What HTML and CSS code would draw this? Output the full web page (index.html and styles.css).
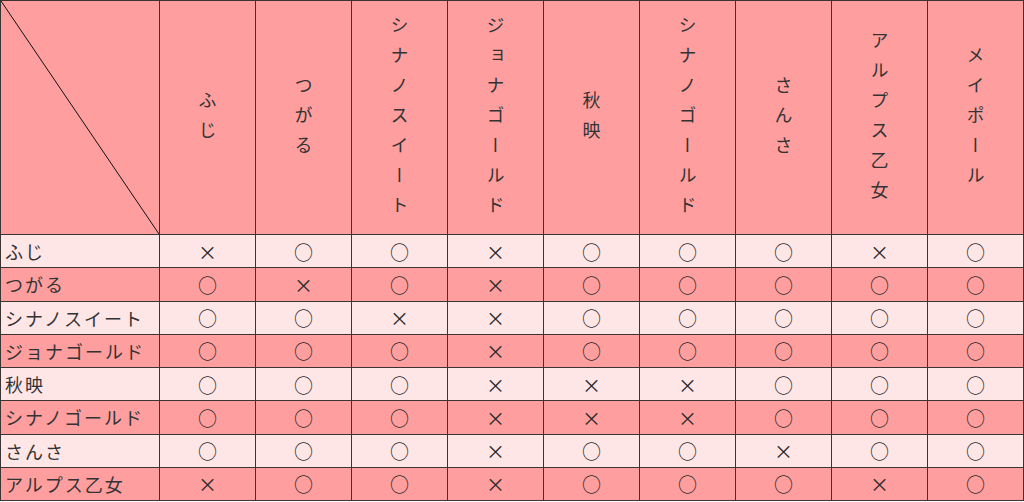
FILE: index.html
```html
<!DOCTYPE html>
<html lang="ja">
<head>
<meta charset="utf-8">
<link rel="stylesheet" href="styles.css">
</head>
<body>
<table class="matrix">
  <colgroup>
    <col class="col-first">
    <col class="col-item"><col class="col-item"><col class="col-item">
    <col class="col-item"><col class="col-item"><col class="col-item">
    <col class="col-item"><col class="col-item"><col class="col-item">
  </colgroup>
  <thead>
    <tr class="head-row">
      <th class="corner"></th>
      <th><span class="vert">ふじ</span></th>
      <th><span class="vert">つがる</span></th>
      <th><span class="vert">シナノスイート</span></th>
      <th><span class="vert">ジョナゴールド</span></th>
      <th><span class="vert">秋映</span></th>
      <th><span class="vert">シナノゴールド</span></th>
      <th><span class="vert">さんさ</span></th>
      <th><span class="vert">アルプス乙女</span></th>
      <th><span class="vert">メイポール</span></th>
    </tr>
  </thead>
  <tbody>
    <tr class="light"><th>ふじ</th><td>×</td><td>○</td><td>○</td><td>×</td><td>○</td><td>○</td><td>○</td><td>×</td><td>○</td></tr>
    <tr class="dark"><th>つがる</th><td>○</td><td>×</td><td>○</td><td>×</td><td>○</td><td>○</td><td>○</td><td>○</td><td>○</td></tr>
    <tr class="light"><th>シナノスイート</th><td>○</td><td>○</td><td>×</td><td>×</td><td>○</td><td>○</td><td>○</td><td>○</td><td>○</td></tr>
    <tr class="dark"><th>ジョナゴールド</th><td>○</td><td>○</td><td>○</td><td>×</td><td>○</td><td>○</td><td>○</td><td>○</td><td>○</td></tr>
    <tr class="light"><th>秋映</th><td>○</td><td>○</td><td>○</td><td>×</td><td>×</td><td>×</td><td>○</td><td>○</td><td>○</td></tr>
    <tr class="dark"><th>シナノゴールド</th><td>○</td><td>○</td><td>○</td><td>×</td><td>×</td><td>×</td><td>○</td><td>○</td><td>○</td></tr>
    <tr class="light"><th>さんさ</th><td>○</td><td>○</td><td>○</td><td>×</td><td>○</td><td>○</td><td>×</td><td>○</td><td>○</td></tr>
    <tr class="dark"><th>アルプス乙女</th><td>×</td><td>○</td><td>○</td><td>×</td><td>○</td><td>○</td><td>○</td><td>×</td><td>○</td></tr>
  </tbody>
</table>
</body>
</html>
```

FILE: styles.css
```css
html, body {
  margin: 0;
  padding: 0;
  background: #ffffff;
}

.matrix {
  border-collapse: collapse;
  table-layout: fixed;
  width: 1024px;
  font-family: "Noto Sans CJK JP", "Noto Sans", sans-serif;
  font-size: 18px;
  color: #333333;
}

.col-first { width: 159px; }
.col-item { width: 96px; }

.matrix th,
.matrix td {
  border: 1px solid #3c3333;
  padding: 0;
  font-weight: normal;
  text-align: center;
  vertical-align: middle;
}

.head-row th {
  height: 233px;
  background: #ff9e9e;
}

.head-row .corner {
  background-color: #ff9e9e;
  background-image: url("data:image/svg+xml,%3Csvg xmlns='http://www.w3.org/2000/svg' viewBox='0 0 100 100' preserveAspectRatio='none'%3E%3Cline x1='0' y1='0' x2='100' y2='100' stroke='%23111' stroke-width='1' vector-effect='non-scaling-stroke'/%3E%3C/svg%3E");
  background-size: 100% 100%;
  background-repeat: no-repeat;
}

.vert {
  display: inline-block;
  writing-mode: vertical-rl;
  text-orientation: upright;
  letter-spacing: 12px;
  line-height: 1;
  margin-bottom: -12px;
}

.matrix tbody th,
.matrix tbody td {
  height: 32.25px;
  line-height: 1;
}

.matrix tbody td {
  font-size: 19px;
  color: #2a2a2a;
}

.matrix tbody th {
  text-align: left;
  padding-left: 4px;
  letter-spacing: 2px;
}

.light th,
.light td {
  background: #ffe6e6;
}

.dark th,
.dark td {
  background: #ff9e9e;
}
```
